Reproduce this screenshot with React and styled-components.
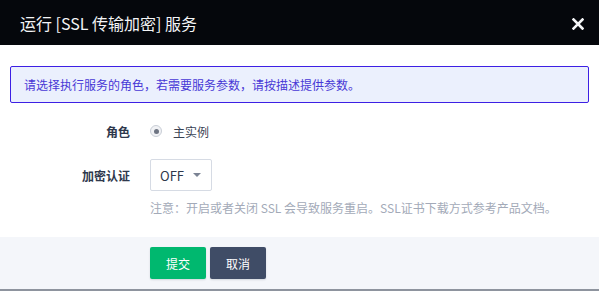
import React from "react";
import styled, { createGlobalStyle } from "styled-components";

const GlobalStyle = createGlobalStyle`
  html, body {
    margin: 0;
    padding: 0;
    background: #8e949e;
  }
  body {
    font-family: "Noto Sans CJK SC", "Noto Sans", sans-serif;
  }
`;

const Modal = styled.div`
  width: 599px;
  height: 289px;
  display: flex;
  flex-direction: column;
  background: #fff;
`;

const Header = styled.div`
  height: 45px;
  flex: none;
  background: #05070c;
  display: flex;
  align-items: center;
  justify-content: space-between;
  padding: 0 15px 0 20px;
  box-sizing: border-box;
`;

const Title = styled.h2`
  margin: 0;
  font-size: 16px;
  font-weight: 400;
  color: #f4f5f7;
`;

const Close = styled.button`
  border: 0;
  background: none;
  padding: 0;
  margin-top: 2px;
  width: 12px;
  height: 12px;
  display: flex;
  cursor: pointer;
`;

const Body = styled.div`
  flex: 1;
  padding: 21px 10px 0;
`;

const Alert = styled.div`
  height: 37px;
  box-sizing: border-box;
  border: 1px solid #3d20e4;
  border-radius: 2px;
  background: #ebf0fd;
  color: #4838d6;
  font-size: 12px;
  display: flex;
  align-items: center;
  padding: 0 13px;
`;

const Form = styled.div`
  display: grid;
  grid-template-columns: 120px 1fr;
  column-gap: 20px;
  margin-top: 16px;
  align-items: center;
`;

const Label = styled.div`
  text-align: right;
  font-size: 12px;
  font-weight: 700;
  color: #2e384c;
  margin-top: ${p => p.$top || 0}px;
`;

const Field = styled.div`
  display: flex;
  align-items: center;
  min-height: 24px;
  margin-top: ${p => p.$top || 0}px;
`;

const Radio = styled.span`
  width: 12px;
  height: 12px;
  box-sizing: border-box;
  border-radius: 50%;
  border: 1px solid #c9ced6;
  background: #f1f2f5;
  display: flex;
  align-items: center;
  justify-content: center;
  margin: 0 11px 0 0;
  &::after {
    content: "";
    width: 5px;
    height: 5px;
    border-radius: 50%;
    background: #6e7482;
  }
`;

const Text = styled.span`
  font-size: 12px;
  color: #3a4354;
`;

const Select = styled.div`
  width: 62px;
  height: 32px;
  box-sizing: border-box;
  border: 1px solid #d6dbe4;
  border-radius: 2px;
  display: flex;
  align-items: center;
  justify-content: space-between;
  padding: 0 10px 0 9px;
  font-size: 13px;
  color: #2e384c;
  &::after {
    content: "";
    border-left: 4px solid transparent;
    border-right: 4px solid transparent;
    border-top: 4px solid #7b8394;
  }
`;

const Help = styled.div`
  grid-column: 2;
  margin-top: 8px;
  font-size: 12px;
  line-height: 18px;
  color: #a3aab8;
`;

const Footer = styled.div`
  height: 52px;
  flex: none;
  background: #f4f6fa;
  display: flex;
  gap: 4px;
  padding: 10px 0 0 150px;
  box-sizing: border-box;
`;

const Button = styled.button`
  width: 56px;
  height: 32px;
  border: 0;
  border-radius: 2px;
  background: ${p => p.$bg};
  color: #fff;
  font-family: inherit;
  font-size: 12px;
  box-shadow: 0 1px 2px rgba(30, 40, 60, 0.15);
  cursor: pointer;
`;

export default function App() {
  return (
    <>
      <GlobalStyle />
      <Modal>
        <Header>
          <Title>运行 [SSL 传输加密] 服务</Title>
          <Close aria-label="关闭">
            <svg width="12" height="12" viewBox="0 0 12 12">
              <path d="M1.5 1.5 L10.5 10.5 M10.5 1.5 L1.5 10.5" stroke="#f4f5f7" strokeWidth="2.6" strokeLinecap="square" />
            </svg>
          </Close>
        </Header>
        <Body>
          <Alert>请选择执行服务的角色，若需要服务参数，请按描述提供参数。</Alert>
          <Form>
            <Label>角色</Label>
            <Field>
              <Radio />
              <Text>主实例</Text>
            </Field>
            <Label $top={16}>加密认证</Label>
            <Field $top={16}>
              <Select>OFF</Select>
            </Field>
            <Help>注意：开启或者关闭 SSL 会导致服务重启。SSL证书下载方式参考产品文档。</Help>
          </Form>
        </Body>
        <Footer>
          <Button $bg="#00b86f">提交</Button>
          <Button $bg="#3f4c66">取消</Button>
        </Footer>
      </Modal>
    </>
  );
}
